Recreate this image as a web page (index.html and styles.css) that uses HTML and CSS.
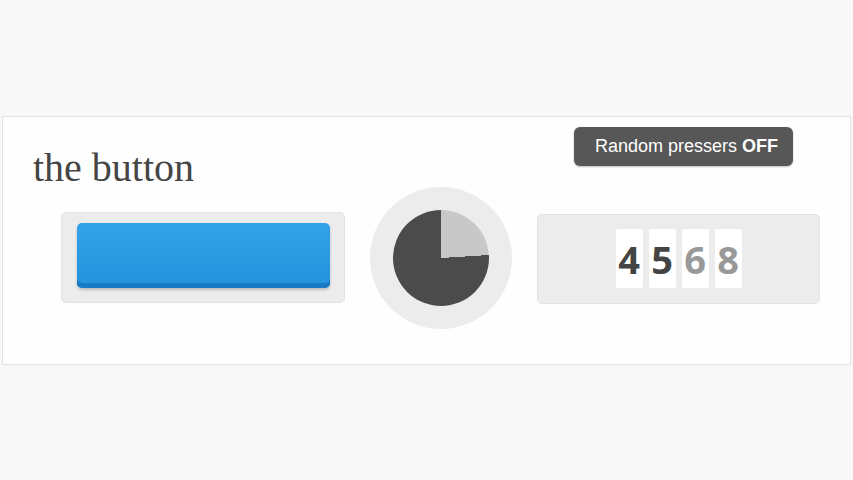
FILE: index.html
```html
<!DOCTYPE html>
<html>
<head>
<meta charset="utf-8">
<link rel="stylesheet" href="styles.css">
</head>
<body>
<div class="panel">
  <div class="toggle">Random pressers <b>OFF</b></div>
  <h1 class="title">the button</h1>
  <div class="row">
    <div class="btn-wrap"><div class="btn"></div></div>
    <div class="timer"><div class="pie"></div></div>
    <div class="counter">
      <span class="digit dark">4</span>
      <span class="digit dark">5</span>
      <span class="digit light">6</span>
      <span class="digit light">8</span>
    </div>
  </div>
</div>
</body>
</html>
```
FILE: styles.css
```css
html, body {
  margin: 0;
  padding: 0;
  background: #f8f8f8;
}
body {
  padding: 116px 2px 0 2px;
  height: 480px;
  box-sizing: border-box;
}
.panel {
  position: relative;
  background: #fefefe;
  border: 1px solid #e3e3e3;
  padding: 32px 30px 35px 30px;
}
.toggle {
  position: absolute;
  left: 571px;
  top: 10px;
  height: 39px;
  line-height: 39px;
  padding: 0 15px 0 21px;
  background: #575757;
  color: #fff;
  border-radius: 6px;
  font-family: "Liberation Sans", Arial, sans-serif;
  font-size: 18px;
  box-shadow: 0 1px 2px rgba(0,0,0,0.25);
}
.toggle b { font-weight: bold; }
.title {
  margin: 0;
  font-family: "Liberation Serif", "Times New Roman", serif;
  font-weight: normal;
  font-size: 40px;
  line-height: 38px;
  color: #454545;
}
.row {
  display: flex;
  align-items: center;
  gap: 25px;
  padding-left: 28px;
}
.btn-wrap {
  width: 284px;
  height: 91px;
  box-sizing: border-box;
  background: #ececec;
  border: 1px solid #e4e4e4;
  border-radius: 5px;
  padding: 10px 14px 0 15px;
  margin-top: -2px;
}
.btn {
  height: 65px;
  border-radius: 5px;
  background: linear-gradient(#33a2e8, #2393dc);
  box-shadow: inset 0 -5px 0 #1a7bc5, 0 2px 3px rgba(0,0,0,0.2);
}
.timer {
  width: 142px;
  height: 142px;
  border-radius: 50%;
  background: #ececec;
  display: flex;
  align-items: center;
  justify-content: center;
}
.pie {
  width: 96px;
  height: 96px;
  border-radius: 50%;
  background: conic-gradient(#c8c8c8 0 24%, #4b4b4b 24% 100%);
}
.counter {
  width: 283px;
  height: 90px;
  box-sizing: border-box;
  background: #ececec;
  border: 1px solid #e2e2e2;
  border-radius: 5px;
  display: flex;
  align-items: center;
  justify-content: center;
  gap: 6px;
  margin-top: 1px;
}
.digit {
  width: 27px;
  height: 59px;
  background: #fff;
  border-radius: 2px;
  display: flex;
  align-items: center;
  justify-content: center;
  font-family: "Open Sans", sans-serif;
  font-weight: bold;
  font-size: 38px;
}
.dark { color: #444; }
.light { color: #999; }
```
